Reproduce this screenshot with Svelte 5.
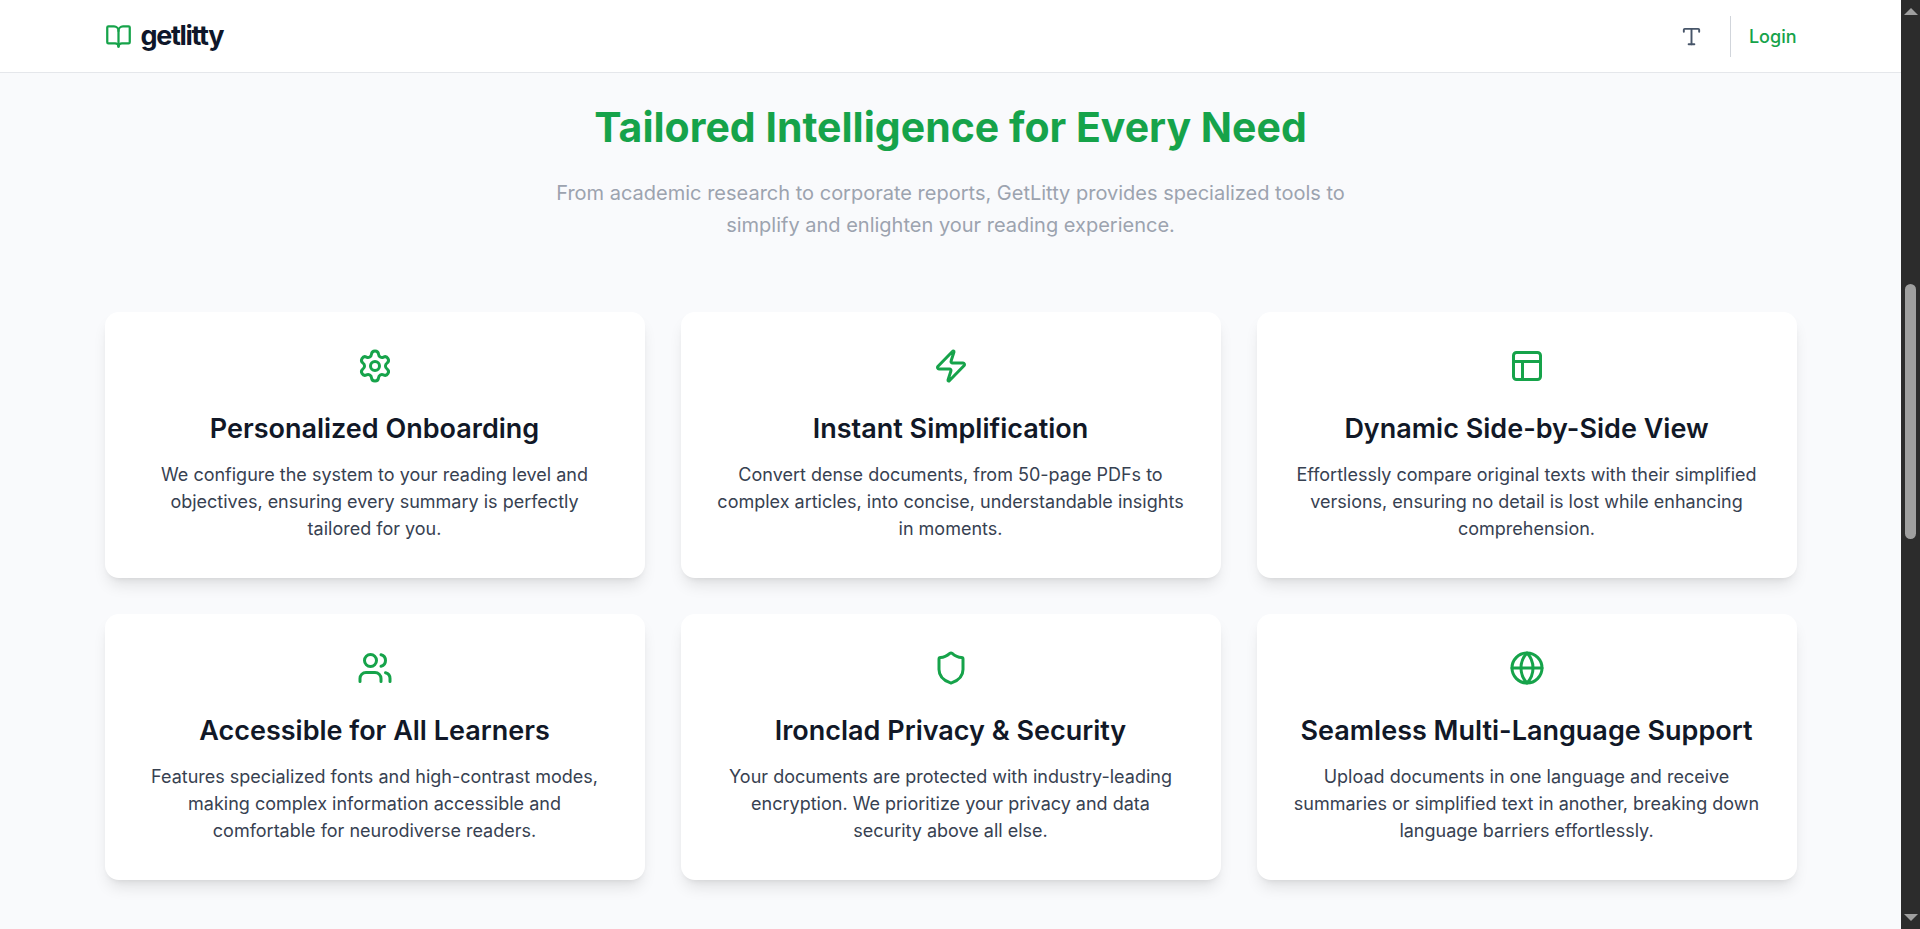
<script lang="ts">
  interface Feature {
    icon: string;
    title: string;
    text: string;
  }

  const features: Feature[] = [
    {
      icon: 'settings',
      title: 'Personalized Onboarding',
      text: 'We configure the system to your reading level and objectives, ensuring every summary is perfectly tailored for you.'
    },
    {
      icon: 'zap',
      title: 'Instant Simplification',
      text: 'Convert dense documents, from 50-page PDFs to complex articles, into concise, understandable insights in moments.'
    },
    {
      icon: 'layout',
      title: 'Dynamic Side-by-Side View',
      text: 'Effortlessly compare original texts with their simplified versions, ensuring no detail is lost while enhancing comprehension.'
    },
    {
      icon: 'users',
      title: 'Accessible for All Learners',
      text: 'Features specialized fonts and high-contrast modes, making complex information accessible and comfortable for neurodiverse readers.'
    },
    {
      icon: 'shield',
      title: 'Ironclad Privacy & Security',
      text: 'Your documents are protected with industry-leading encryption. We prioritize your privacy and data security above all else.'
    },
    {
      icon: 'globe',
      title: 'Seamless Multi-Language Support',
      text: 'Upload documents in one language and receive summaries or simplified text in another, breaking down language barriers effortlessly.'
    }
  ];

  const icons: Record<string, string[]> = {
    book: [
      'M12 7v14',
      'M3 18a1 1 0 0 1-1-1V4a1 1 0 0 1 1-1h5a4 4 0 0 1 4 4 4 4 0 0 1 4-4h5a1 1 0 0 1 1 1v13a1 1 0 0 1-1 1h-6a3 3 0 0 0-3 3 3 3 0 0 0-3-3z'
    ],
    type: ['M12 4v16', 'M4 7V5a1 1 0 0 1 1-1h14a1 1 0 0 1 1 1v2', 'M9 20h6'],
    settings: [
      'M9.671 4.136a2.34 2.34 0 0 1 4.659 0 2.34 2.34 0 0 0 3.319 1.915 2.34 2.34 0 0 1 2.33 4.033 2.34 2.34 0 0 0 0 3.831 2.34 2.34 0 0 1-2.33 4.033 2.34 2.34 0 0 0-3.319 1.915 2.34 2.34 0 0 1-4.659 0 2.34 2.34 0 0 0-3.32-1.915 2.34 2.34 0 0 1-2.33-4.033 2.34 2.34 0 0 0 0-3.831A2.34 2.34 0 0 1 6.35 6.051a2.34 2.34 0 0 0 3.319-1.915',
      'M15 12a3 3 0 1 1-6 0 3 3 0 0 1 6 0z'
    ],
    zap: [
      'M4 14a1 1 0 0 1-.78-1.63l9.9-10.2a.5.5 0 0 1 .86.46l-1.92 6.02A1 1 0 0 0 13 10h7a1 1 0 0 1 .78 1.63l-9.9 10.2a.5.5 0 0 1-.86-.46l1.92-6.02A1 1 0 0 0 11 14z'
    ],
    layout: [
      'M5 3h14a2 2 0 0 1 2 2v14a2 2 0 0 1-2 2H5a2 2 0 0 1-2-2V5a2 2 0 0 1 2-2z',
      'M3 9h18',
      'M9 21V9'
    ],
    users: [
      'M16 21v-2a4 4 0 0 0-4-4H6a4 4 0 0 0-4 4v2',
      'M16 3.128a4 4 0 0 1 0 7.744',
      'M22 21v-2a4 4 0 0 0-3-3.87',
      'M13 7a4 4 0 1 1-8 0 4 4 0 0 1 8 0z'
    ],
    shield: [
      'M20 13c0 5-3.5 7.5-7.66 8.95a1 1 0 0 1-.67-.01C7.5 20.5 4 18 4 13V6a1 1 0 0 1 1-1c2 0 4.5-1.2 6.24-2.72a1.17 1.17 0 0 1 1.52 0C14.51 3.81 17 5 19 5a1 1 0 0 1 1 1z'
    ],
    globe: [
      'M22 12a10 10 0 1 1-20 0 10 10 0 0 1 20 0z',
      'M12 2a14.5 14.5 0 0 0 0 20 14.5 14.5 0 0 0 0-20',
      'M2 12h20'
    ]
  };

  // share of the scroll track above, under and below the thumb
  const scroll = { before: 261, thumb: 255, after: 367 };
</script>

{#snippet icon(name: string)}
  <svg class="icon {name}" viewBox="0 0 24 24" aria-hidden="true">
    {#each icons[name] as d}
      <path {d} />
    {/each}
  </svg>
{/snippet}

<div class="window">
  <div class="page">
    <header>
      <div class="container bar">
        <a class="brand" href="/">
          {@render icon('book')}
          <span>getlitty</span>
        </a>
        <nav>
          <button type="button" aria-label="Text settings">
            {@render icon('type')}
          </button>
          <a class="login" href="/login">Login</a>
        </nav>
      </div>
    </header>

    <main class="container">
      <div class="intro">
        <h2>Tailored Intelligence for Every Need</h2>
        <p>
          From academic research to corporate reports, GetLitty provides specialized tools to
          simplify and enlighten your reading experience.
        </p>
      </div>

      <div class="grid">
        {#each features as feature}
          <article>
            {@render icon(feature.icon)}
            <h3>{feature.title}</h3>
            <p>{feature.text}</p>
          </article>
        {/each}
      </div>
    </main>
  </div>

  <div class="scrollbar" aria-hidden="true">
    <span class="arrow up"></span>
    <div class="track">
      <div style="flex-grow: {scroll.before}"></div>
      <div class="thumb" style="flex-grow: {scroll.thumb}"></div>
      <div style="flex-grow: {scroll.after}"></div>
    </div>
    <span class="arrow down"></span>
  </div>
</div>

<style>
  :global(body) {
    margin: 0;
    background-color: #f9fafc;
    color: #111827;
    font-family: Inter, sans-serif;
    font-size: 18px;
    line-height: 27px;
  }

  .window {
    display: flex;
    min-height: 100vh;
  }

  .page {
    flex: 1;
    min-width: 0;
    background-color: #f9fafc;
  }

  .container {
    box-sizing: border-box;
    max-width: 1728px;
    margin: 0 auto;
    padding: 0 18px;
  }

  .icon {
    display: block;
    width: 36px;
    height: 36px;
    fill: none;
    stroke: currentColor;
    stroke-width: 2;
    stroke-linecap: round;
    stroke-linejoin: round;
  }

  header {
    background-color: #ffffff;
    border-bottom: 1px solid #e5e7eb;
  }

  .bar {
    display: flex;
    align-items: center;
    justify-content: space-between;
    height: 72px;
  }

  .brand {
    display: flex;
    align-items: center;
    gap: 9px;
    color: #0f172a;
    font-size: 27px;
    font-weight: 700;
    letter-spacing: -0.05em;
    line-height: 36px;
    text-decoration: none;
  }

  .icon.book {
    width: 27px;
    height: 27px;
    color: #16a34a;
  }

  nav {
    display: flex;
    align-items: center;
    gap: 18px;
  }

  nav button {
    display: flex;
    align-items: center;
    justify-content: center;
    width: 40px;
    height: 40px;
    padding: 0;
    background: none;
    border: none;
    border-radius: 8px;
    color: #475569;
    cursor: pointer;
  }

  .icon.type {
    width: 23px;
    height: 23px;
  }

  .login {
    padding: 7px 0 7px 18px;
    border-left: 1px solid #d1d5db;
    color: #16a34a;
    font-weight: 500;
    text-decoration: none;
  }

  main {
    padding-bottom: 48px;
  }

  .intro {
    max-width: 864px;
    margin: 0 auto;
    padding: 32px 0 71px;
    text-align: center;
  }

  h2 {
    margin: 0 0 27px;
    color: #16a34a;
    font-size: 41px;
    font-weight: 700;
    line-height: 45px;
  }

  .intro p {
    margin: 0;
    color: #9ca3af;
    font-size: 20px;
    line-height: 32px;
  }

  .grid {
    display: grid;
    grid-template-columns: repeat(3, 1fr);
    gap: 36px;
  }

  article {
    display: flex;
    flex-direction: column;
    align-items: center;
    padding: 36px;
    background-color: #ffffff;
    border-radius: 14px;
    box-shadow:
      0 10px 15px -3px rgba(0, 0, 0, 0.1),
      0 4px 6px -4px rgba(0, 0, 0, 0.1);
    text-align: center;
  }

  article .icon {
    color: #16a34a;
  }

  h3 {
    margin: 27px 0 14px;
    color: #111827;
    font-size: 27px;
    font-weight: 600;
    line-height: 36px;
  }

  article p {
    margin: 0;
    color: #374151;
  }

  .scrollbar {
    display: flex;
    flex-direction: column;
    align-items: center;
    box-sizing: border-box;
    width: 19px;
    height: 100vh;
    padding: 8px 0;
    background-color: #2c2c2c;
  }

  .arrow {
    border: 0 solid transparent;
    border-width: 0 7px;
  }

  .arrow.up {
    border-bottom: 7px solid #9f9f9f;
  }

  .arrow.down {
    border-top: 7px solid #9f9f9f;
  }

  .track {
    display: flex;
    flex: 1;
    flex-direction: column;
    padding: 8px 0;
  }

  .thumb {
    width: 11px;
    border-radius: 6px;
    background-color: #9f9f9f;
  }

  @media (max-width: 1100px) {
    .grid {
      grid-template-columns: 1fr;
    }
  }
</style>
